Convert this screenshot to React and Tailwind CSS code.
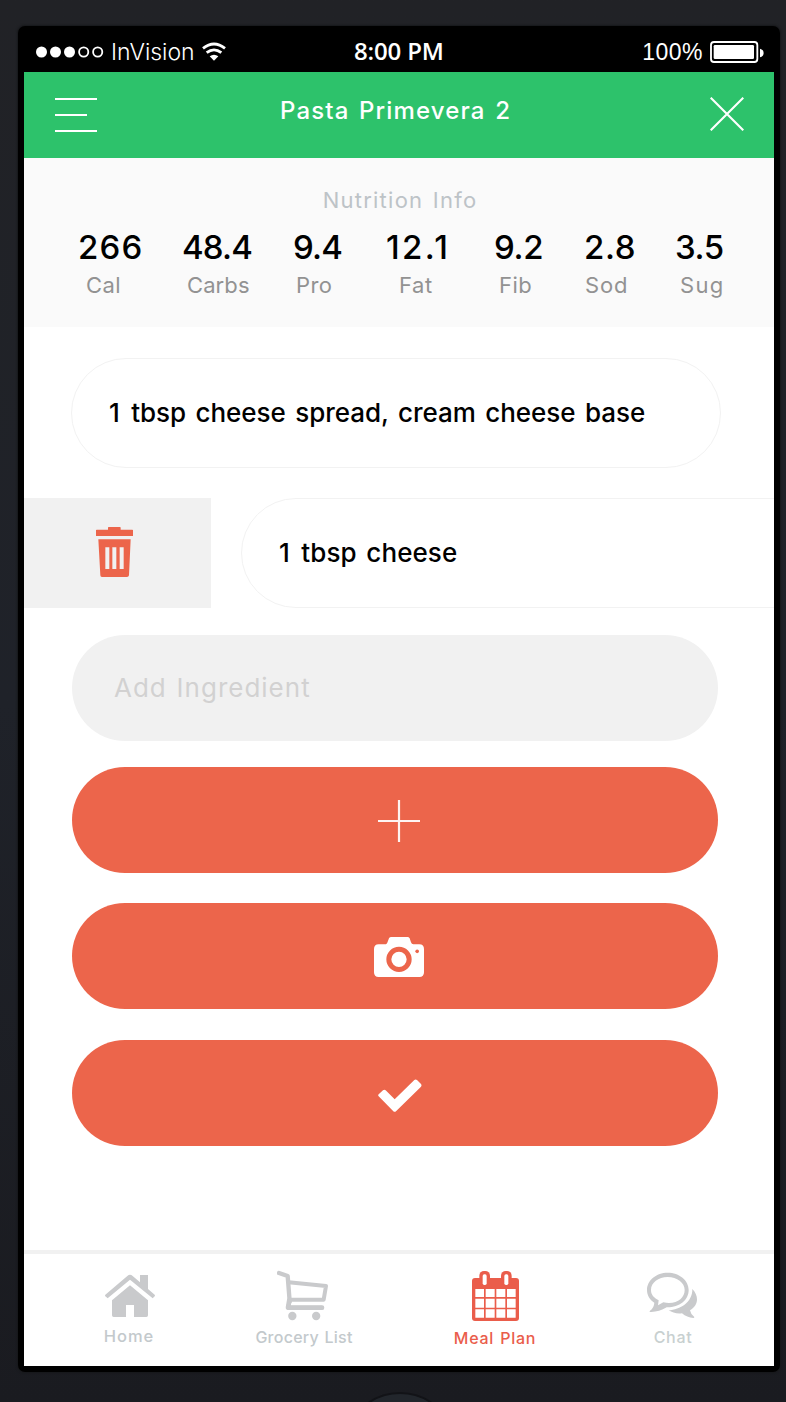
import React from "react";

function StatusBar() {
  return (
    <div className="flex h-[46px] shrink-0 items-center pl-3 pr-[10px] text-white">
      <svg className="mt-[5px] h-3 w-[68px]" viewBox="0 0 68 12">
        <circle cx="5.5" cy="6" r="5.5" fill="currentColor" />
        <circle cx="19.5" cy="6" r="5.5" fill="currentColor" />
        <circle cx="33.5" cy="6" r="5.5" fill="currentColor" />
        <circle cx="47.7" cy="6" r="4.6" fill="none" stroke="currentColor" strokeWidth="1.8" />
        <circle cx="61.7" cy="6" r="4.6" fill="none" stroke="currentColor" strokeWidth="1.8" />
      </svg>
      <span className="ml-[7px] mt-[5px] w-[91px] font-[Inter,sans-serif] text-[23px] font-light leading-7">InVision</span>
      <svg className="mt-1 h-[19px] w-6" viewBox="606 124 72 57" fill="none" stroke="currentColor" strokeWidth="8.5">
        <path d="M609 143 Q642 117 675 143" />
        <path d="M620 156 Q642 139 664 156" />
        <path d="M629 167 Q642 157 655 167 L642 180 Z" fill="currentColor" stroke="none" />
      </svg>
      <span className="ml-[128px] mt-[3px] font-['Open_Sans','Noto_Sans',sans-serif] text-[24px] font-semibold leading-7 tracking-[-0.15px]">8:00 PM</span>
      <span className="ml-auto mt-[6px] font-['Liberation_Sans',sans-serif] text-[23px] leading-7 tracking-[0.5px]">100%</span>
      <svg className="ml-[7px] mt-[5px] h-[22px] w-[54px]" viewBox="951 120 162 66">
        <rect x="954" y="123" width="139" height="60" rx="9" fill="none" stroke="currentColor" strokeWidth="5.5" />
        <rect x="962" y="132" width="121" height="42" rx="4" fill="currentColor" />
        <path d="M1101 143 Q1112 146 1112 156 Q1112 166 1101 169 Z" fill="currentColor" />
      </svg>
    </div>
  );
}

function Header() {
  return (
    <header className="flex h-[86px] shrink-0 items-start bg-[#2dc26b] pl-[31px] pr-[30px] text-white">
      <button className="mt-[26px] flex w-[42px] flex-col gap-[14px]" aria-label="Menu">
        <span className="h-[2px] w-full bg-white" />
        <span className="h-[2px] w-8 bg-white" />
        <span className="h-[2px] w-full bg-white" />
      </button>
      <h1 className="ml-[183px] mt-6 whitespace-nowrap text-[24px] font-medium leading-[30px] tracking-[1.15px] [word-spacing:2px]">
        Pasta Primevera 2
      </h1>
      <button className="ml-auto mt-[25px]" aria-label="Close">
        <svg className="h-[34px] w-[34px]" viewBox="0 0 34 34" stroke="currentColor" strokeWidth="2.1">
          <path d="M0.7 0.7 L33.3 33.3 M33.3 0.7 L0.7 33.3" />
        </svg>
      </button>
    </header>
  );
}

const values = [
  ["266", "tracking-[1.2px]"],
  ["48.4", "tracking-[-0.8px]"],
  ["9.4", "tracking-[-0.8px]"],
  ["12.1", "tracking-[2.4px]"],
  ["9.2", "tracking-[-0.3px]"],
  ["2.8", "tracking-[0.6px]"],
  ["3.5", "tracking-[-0.4px]"],
];

const labels = [
  ["Cal", "tracking-[0.4px]"],
  ["Carbs", "tracking-[0.1px]"],
  ["Pro", "tracking-[0.4px]"],
  ["Fat", "tracking-[0.6px]"],
  ["Fib", "tracking-[0.5px]"],
  ["Sod", "tracking-[0.9px]"],
  ["Sug", "tracking-[1.3px]"],
];

function Nutrition() {
  return (
    <section className="h-[169px] shrink-0 bg-[#fafafa] pt-[29px]">
      <h2 className="pl-[2px] text-center text-[22px] leading-[26px] tracking-[1.25px] text-[#bdc3c7] [word-spacing:2px]">
        Nutrition Info
      </h2>
      <div className="mt-4 grid grid-cols-[104px_111px_93px_108px_90px_91px_1fr] pl-[54px] text-[33px] font-medium leading-9 text-black">
        {values.map(([text, tracking]) => (
          <span key={text} className={tracking}>{text}</span>
        ))}
      </div>
      <div className="mt-[6px] grid grid-cols-[101px_109px_103px_100px_86px_95px_1fr] pl-[62px] text-[22px] leading-7 text-[#929292]">
        {labels.map(([text, tracking]) => (
          <span key={text} className={tracking}>{text}</span>
        ))}
      </div>
    </section>
  );
}

function TrashIcon() {
  return (
    <svg className="h-[50px] w-[37px]" viewBox="288 141 111 150">
      <path fill="#ec654b" d="M288 151 Q288 149 290 149 H324 V143 Q324 141 326 141 H360 Q362 141 362 143 V149 H397 Q399 149 399 151 V168 H288Z" />
      <path fill="#ec654b" fillRule="evenodd" d="M295 178H392L387 286Q386 291 381 291H306Q301 291 301 286Z M316 202V267H328V202Z M337 202V267H349V202Z M359 202V267H371V202Z" />
    </svg>
  );
}

function Ingredients() {
  return (
    <div className="flex flex-col text-[26px] font-medium leading-9 text-black [word-spacing:2.5px]">
      <div className="ml-[47px] mt-[31px] flex h-[110px] w-[650px] items-center rounded-full border border-[#f2f2f2] pl-[37px]">
        <span className="whitespace-nowrap tracking-[-0.03px]"><span className="tracking-[2px]">1</span> tbsp cheese spread, cream cheese base</span>
      </div>
      <div className="mt-[30px] flex h-[110px] overflow-hidden">
        <button className="flex w-[187px] shrink-0 items-center justify-center bg-[#f1f1f1] pb-[2px] pr-[6px]" aria-label="Delete">
          <TrashIcon />
        </button>
        <div className="ml-[30px] flex w-[650px] shrink-0 items-center rounded-full border border-[#f2f2f2] pl-[37px]">
          <span className="whitespace-nowrap tracking-[0.1px]"><span className="tracking-[2px]">1</span> tbsp cheese</span>
        </div>
      </div>
    </div>
  );
}

function Actions() {
  return (
    <div className="mt-[27px] flex flex-col px-12">
      <div className="flex h-[106px] w-[646px] items-center rounded-full bg-[#f1f1f1] pl-[42px] text-[26px] leading-9 tracking-[1px] text-[#d2d1d1] [word-spacing:1.5px]">
        Add Ingredient
      </div>
      <button className="mt-[26px] flex h-[106px] w-[646px] items-center justify-center rounded-full bg-[#ec654b] pl-2 pt-[2px]" aria-label="Add">
        <svg className="h-[42px] w-[42px]" viewBox="0 0 42 42" stroke="#fff" strokeOpacity="0.93" strokeWidth="2.2">
          <path d="M21 0 V42 M0 21 H42" />
        </svg>
      </button>
      <button className="mt-[30px] flex h-[106px] w-[646px] items-center justify-center rounded-full bg-[#ec654b] pl-2 pt-[2px]" aria-label="Take photo">
        <svg className="h-10 w-[50px]" viewBox="102 471 150 120">
          <path fill="#fff" d="M116 493 H138 Q142 490 143 485 L147 475 Q149 471 154 471 H202 Q207 471 209 475 L213 487 Q215 493 220 493 H238 Q252 493 252 507 V577 Q252 591 238 591 H116 Q102 591 102 577 V507 Q102 493 116 493Z" />
          <circle cx="177" cy="538" r="30.5" fill="#fff" stroke="#ec654b" strokeWidth="15" />
          <circle cx="231.5" cy="514" r="5.5" fill="#ec654b" />
        </svg>
      </button>
      <button className="mt-[31px] flex h-[106px] w-[646px] items-center justify-center rounded-full bg-[#ec654b] pl-[10px] pt-[5px]" aria-label="Confirm">
        <svg className="h-[33px] w-[44px]" viewBox="116 898 132 99">
          <path fill="#fff" d="M118 950 Q115 947 118 944 L131 932 Q135 929 139 932 L166 959 L225 901 Q229 898 233 901 L245 913 Q248 917 245 921 L170 995 Q166 998 162 995Z" />
        </svg>
      </button>
    </div>
  );
}

function NavBar() {
  return (
    <nav className="mt-auto flex h-[116px] shrink-0 border-t-4 border-[#f1f1f1] pt-4 text-[16px] font-medium leading-5 text-[#c3c9cc]">
      <a className="flex w-[210px] flex-col items-center">
        <svg className="ml-[2px] h-[51px] w-[50px]" viewBox="75 90 150 153" fill="#c9cacc">
          <path d="M76 169 Q74 167 76 164 L142 108 Q150 101 158 108 L180 127 V105 H204 V147 L224 164 Q226 167 224 169 L218 175 L150 119 L83 175Z" />
          <path d="M150 136 L204 181 V226 Q204 231 199 231 H162 V195 H138 V231 H101 Q96 231 96 226 V181Z" />
        </svg>
        <span className="mt-[5px] text-[16.5px] tracking-[1px]">Home</span>
      </a>
      <a className="flex w-[140px] flex-col items-center">
        <svg className="mr-[3px] h-[51px] w-[51px]" viewBox="591 90 153 153" fill="none" stroke="#c9cacc" strokeWidth="12" strokeLinecap="round" strokeLinejoin="round">
          <path d="M597 99 L623 108 L629 184" strokeWidth="13" />
          <path d="M626 127 L738 138 L731 179 H630 L624 203 H726" />
          <path d="M628 180 L624 203 H726" strokeWidth="14" />
          <circle cx="637" cy="228" r="12.5" fill="#c9cacc" stroke="none" />
          <circle cx="708.5" cy="228" r="12.5" fill="#c9cacc" stroke="none" />
        </svg>
        <span className="mt-[6px] whitespace-nowrap tracking-[0.25px] [word-spacing:1px]">Grocery List</span>
      </a>
      <a className="flex w-[242px] flex-col items-center text-[#ea5d4b]">
        <svg className="ml-px h-[51px] w-[47px]" viewBox="276 90 141 153">
          <rect x="276" y="114" width="141" height="129" rx="9" fill="#ea5d4b" />
          <rect x="298" y="93" width="32" height="46" rx="14" fill="#ea5d4b" />
          <rect x="363" y="93" width="32" height="46" rx="14" fill="#ea5d4b" />
          <rect x="308" y="103" width="12" height="32" rx="5" fill="#fff" />
          <rect x="373" y="103" width="12" height="32" rx="5" fill="#fff" />
          <path fill="#fff" d="M286 147h26v24h-26z M317 147h27v24h-27z M349 147h27v24h-27z M381 147h26v24h-26z M286 176h26v27h-26z M317 176h27v27h-27z M349 176h27v27h-27z M381 176h26v27h-26z M286 208h26v25h-26z M317 208h27v25h-27z M349 208h27v25h-27z M381 208h26v25h-26z" />
        </svg>
        <span className="mt-[7px] tracking-[0.75px] [word-spacing:1px]">Meal Plan</span>
      </a>
      <a className="flex w-[114px] flex-col items-center text-[#c8d0d0]">
        <svg className="mr-[3px] h-[51px] w-[50px]" viewBox="801 90 150 153">
          <path fill="#c9cacc" fillRule="evenodd" d="M863 98 C898 98 926 121 926 150 C926 181 897 203 860 202 C844 211 827 217 810 216 Q807 215 810 212 Q822 204 823 188 C809 179 801 166 801 150 C801 121 829 98 863 98Z M863 111 C835 111 813 128 813 150 C813 164 821 173 836 181 L834 196 L850 187 C888 195 914 176 914 150 C914 128 891 111 863 111Z" />
          <path fill="#c9cacc" d="M937 147 C947 157 951 168 951 178 C951 192 944 203 930 211 Q932 223 943 231 Q943 234 940 234 Q921 233 906 220 C890 222 877 218 866 211 C900 209 938 187 937 147Z" />
        </svg>
        <span className="mt-[6px] tracking-[0.7px]">Chat</span>
      </a>
    </nav>
  );
}

export default function App() {
  return (
    <div className="flex h-[1402px] w-[786px] flex-col overflow-hidden bg-linear-to-b from-[#212226] via-[#1f2229] to-[#1a1b20] pl-[18px] pt-[26px] font-[Inter,'Liberation_Sans',sans-serif]">
      <div className="flex h-[1346px] w-[762px] shrink-0 flex-col rounded-[7px] bg-black px-[6px] pb-[6px] shadow-[0_0_2px_1px_#17181b]">
        <StatusBar />
        <main className="flex min-h-0 flex-1 flex-col overflow-hidden bg-white">
          <Header />
          <Nutrition />
          <Ingredients />
          <Actions />
          <NavBar />
        </main>
      </div>
      <div className="ml-[326px] mt-5 h-28 w-28 shrink-0 rounded-full border-2 border-[#121317] bg-[#22262c]" />
    </div>
  );
}
